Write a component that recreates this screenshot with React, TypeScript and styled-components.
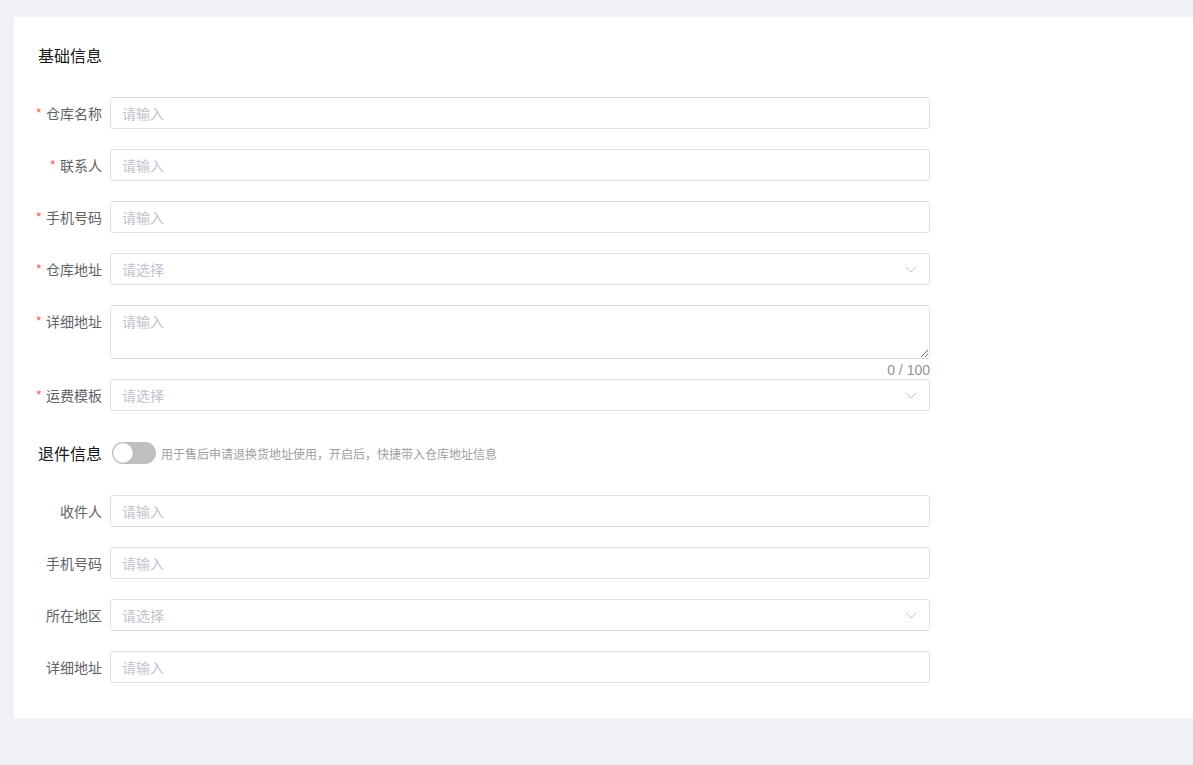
import React from "react";
import styled, { createGlobalStyle } from "styled-components";

const Global = createGlobalStyle`
  html, body { margin: 0; padding: 0; background: #f0f2f5; }
  body { font-family: "Noto Sans CJK SC", "Noto Sans", sans-serif; }
  * { box-sizing: border-box; }
`;

const Page = styled.div`
  padding: 17px 0 0 14px;
  min-height: 765px;
`;

const Card = styled.div`
  background: #fff;
  padding: 26px 24px 15px;
`;

const Title = styled.div`
  font-size: 16px;
  line-height: 24px;
  color: #1a1a1a;
  margin-bottom: 30px;
`;

const Row = styled.div`
  display: flex;
  align-items: flex-start;
  margin-bottom: 20px;
`;

const Label = styled.label<{ $required?: boolean }>`
  display: flex;
  justify-content: flex-end;
  width: 72px;
  flex: none;
  padding-right: 8px;
  font-size: 14px;
  line-height: 32px;
  color: #606266;
  white-space: nowrap;
  &::before {
    content: ${(p) => (p.$required ? '"*"' : "none")};
    color: #f56c6c;
    margin-right: 4px;
  }
`;

const Field = styled.div`
  position: relative;
  width: 820px;
`;

const Input = styled.input`
  display: block;
  width: 100%;
  height: 32px;
  border: 1px solid #dcdfe6;
  border-radius: 3px;
  padding: 0 11px;
  font-family: inherit;
  font-size: 14px;
  color: #606266;
  outline: none;
  background: #fff;
  &::placeholder { color: #c0c4cc; }
`;

const SelectInput = styled(Input)`
  padding-right: 30px;
  cursor: pointer;
`;

const Chevron = styled.svg`
  position: absolute;
  right: 13px;
  top: 10px;
  width: 12px;
  height: 12px;
  pointer-events: none;
`;

const TextArea = styled.textarea`
  display: block;
  width: 100%;
  height: 54px;
  border: 1px solid #dcdfe6;
  border-radius: 3px;
  padding: 5px 11px;
  font-family: inherit;
  font-size: 14px;
  line-height: 1.5;
  color: #606266;
  outline: none;
  resize: vertical;
  &::placeholder { color: #c0c4cc; }
`;

const Counter = styled.span`
  position: absolute;
  right: 0;
  top: 100%;
  font-family: "Liberation Sans", Arial, sans-serif;
  font-size: 14px;
  line-height: 22px;
  color: #909399;
`;

const SectionHeader = styled.div`
  display: flex;
  align-items: center;
  height: 44px;
  margin-bottom: 20px;
`;

const SectionTitle = styled.span`
  font-size: 16px;
  color: #1a1a1a;
  margin-right: 10px;
`;

const Switch = styled.span<{ $on?: boolean }>`
  position: relative;
  display: inline-block;
  width: 44px;
  height: 22px;
  border-radius: 11px;
  background: ${(p) => (p.$on ? "#409eff" : "#bfbfbf")};
  flex: none;
  &::after {
    content: "";
    position: absolute;
    top: 1px;
    left: ${(p) => (p.$on ? "23px" : "1px")};
    width: 20px;
    height: 20px;
    border-radius: 50%;
    background: #fff;
    box-shadow: 0 0 1px rgba(0, 0, 0, 0.3);
  }
`;

const Hint = styled.span`
  margin-left: 5px;
  font-size: 12px;
  color: #a0a0a0;
`;

const ChevronIcon = () => (
  <Chevron viewBox="0 0 12 12">
    <path d="M1 4 L6 9 L11 4" fill="none" stroke="#c0c4cc" strokeWidth="1" />
  </Chevron>
);

const TextRow = ({ label, required }: { label: string; required?: boolean }) => (
  <Row>
    <Label $required={required}>{label}</Label>
    <Field>
      <Input placeholder="请输入" />
    </Field>
  </Row>
);

const SelectRow = ({ label, required }: { label: string; required?: boolean }) => (
  <Row>
    <Label $required={required}>{label}</Label>
    <Field>
      <SelectInput placeholder="请选择" readOnly />
      <ChevronIcon />
    </Field>
  </Row>
);

export default function App() {
  return (
    <>
      <Global />
      <Page>
        <Card>
          <Title>基础信息</Title>
          <TextRow label="仓库名称" required />
          <TextRow label="联系人" required />
          <TextRow label="手机号码" required />
          <SelectRow label="仓库地址" required />
          <Row>
            <Label $required>详细地址</Label>
            <Field>
              <TextArea placeholder="请输入" maxLength={100} />
              <Counter>0 / 100</Counter>
            </Field>
          </Row>
          <SelectRow label="运费模板" required />
          <SectionHeader>
            <SectionTitle>退件信息</SectionTitle>
            <Switch />
            <Hint>用于售后申请退换货地址使用，开启后，快捷带入仓库地址信息</Hint>
          </SectionHeader>
          <TextRow label="收件人" />
          <TextRow label="手机号码" />
          <SelectRow label="所在地区" />
          <TextRow label="详细地址" />
        </Card>
      </Page>
    </>
  );
}
